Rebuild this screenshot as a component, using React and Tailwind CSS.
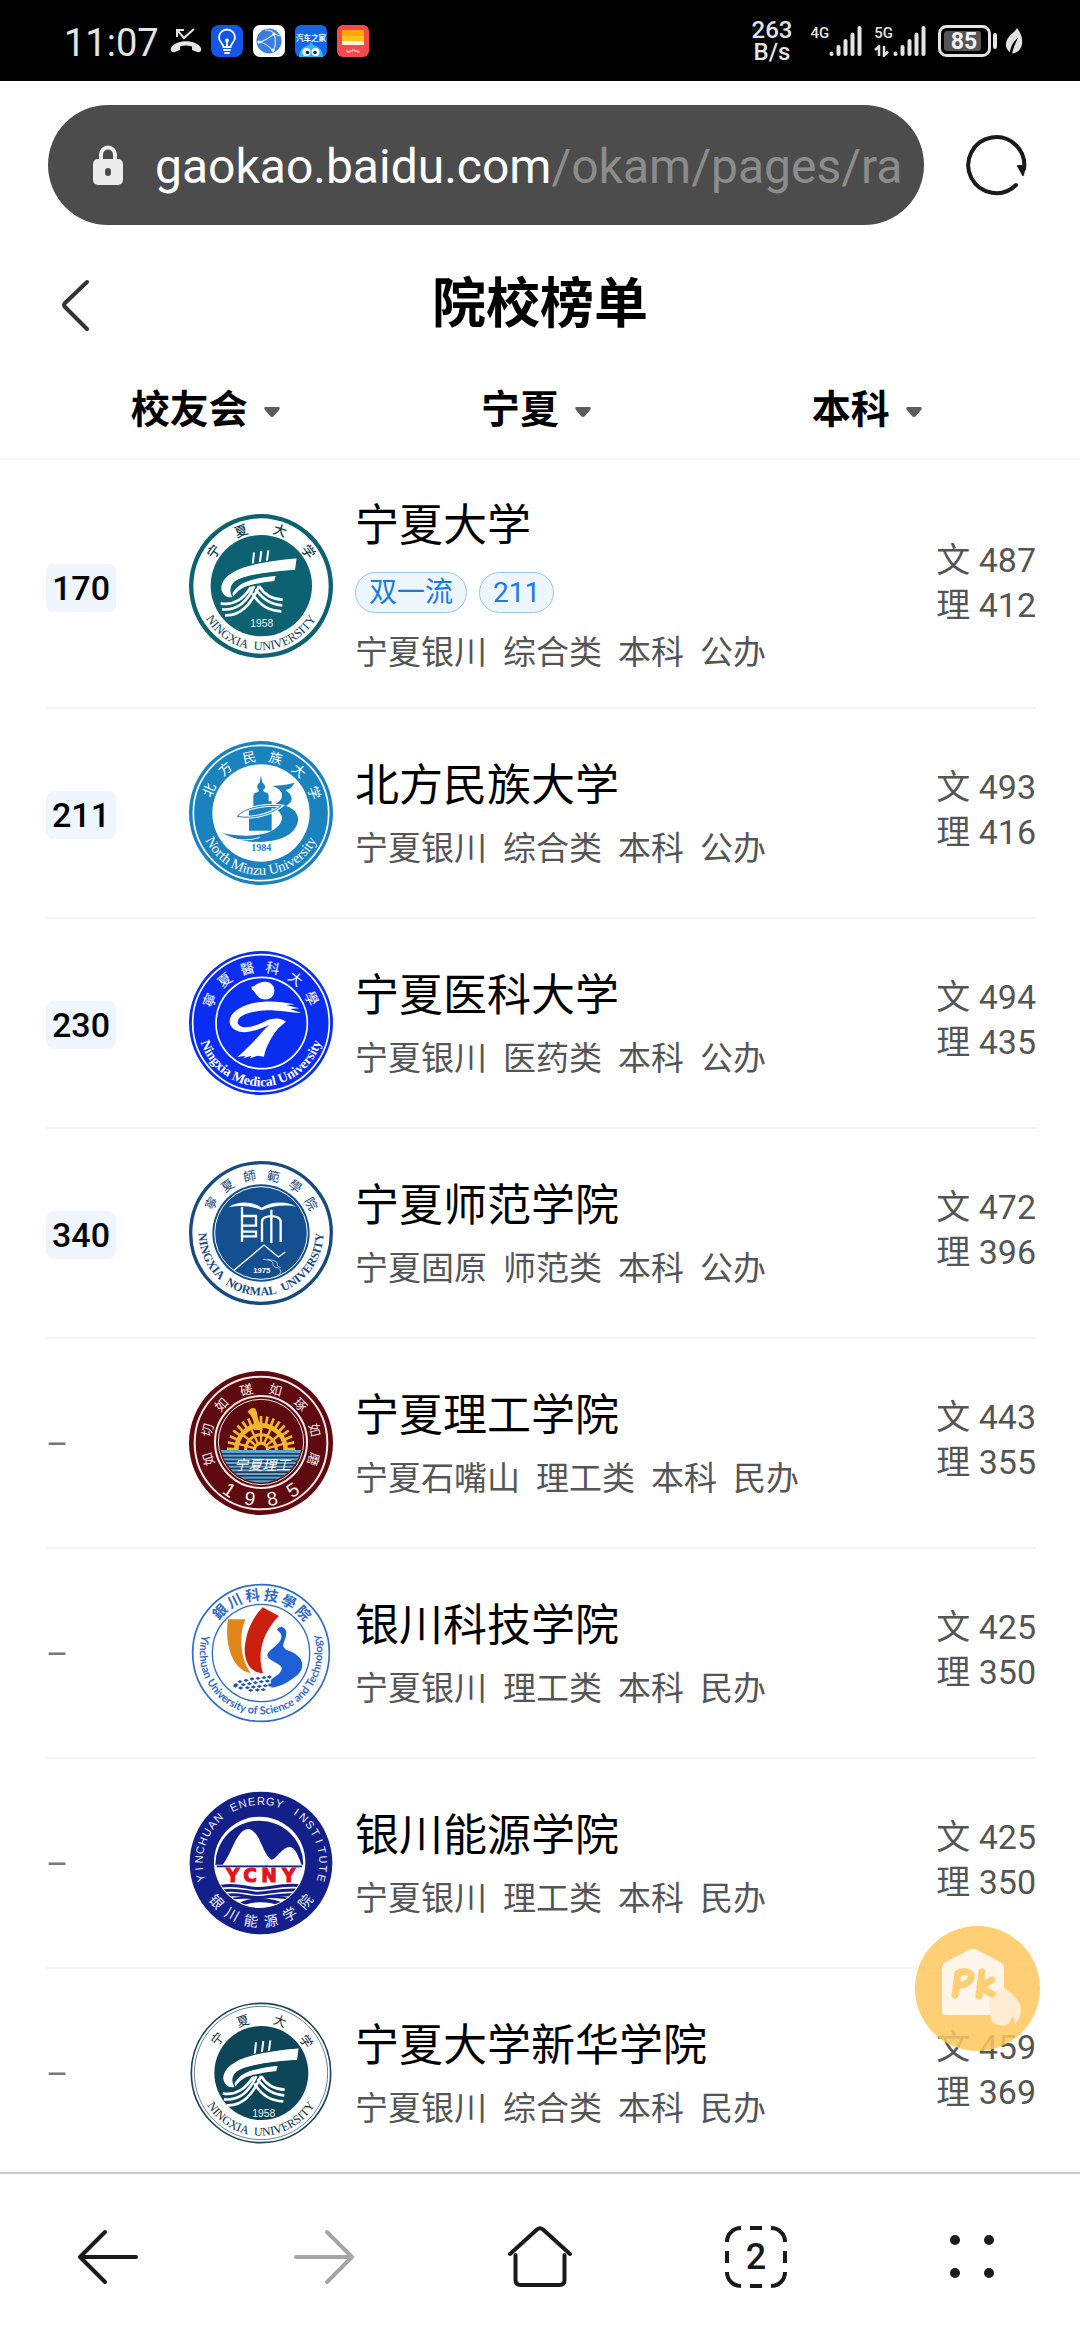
import React, { useId } from "react";

const CJK = "'Noto Sans CJK SC', sans-serif";
const SERIF = "'Liberation Serif', serif";
const SANS = "'Liberation Sans', sans-serif";

/* ---------- helpers for the round seals (432 x 432 units, centred on 0,0) ---------- */

function Seal({ label, children }) {
  return (
    <svg viewBox="-216 -216 432 432" className="size-36 shrink-0" role="img" aria-label={label}>
      {children}
    </svg>
  );
}

function ArcText({ text, r, size, fill, family = SERIF, weight = 400 }) {
  const id = useId();
  return (
    <>
      <path id={id} d={`M0 ${-r} a${r} ${r} 0 1 0 0 ${2 * r} a${r} ${r} 0 1 0 0 ${-2 * r}`} fill="none" />
      <text fontSize={size} fill={fill} fontFamily={family} fontWeight={weight} textAnchor="middle">
        <textPath href={`#${id}`} startOffset="50%">{text}</textPath>
      </text>
    </>
  );
}

function RingChars({ text, r, from, to, size, fill, angles, bottom = false, family = CJK, weight = 400 }) {
  const chars = Array.from(text);
  return chars.map((c, i) => {
    const a = angles ? angles[i] : from + ((to - from) * i) / (chars.length - 1);
    return (
      <text
        key={i}
        x="0"
        y={bottom ? r : -r}
        transform={`rotate(${bottom ? -a : a})`}
        fontSize={size}
        fill={fill}
        fontFamily={family}
        fontWeight={weight}
        textAnchor="middle"
      >
        {c}
      </text>
    );
  });
}

function NingxiaFigure({ color }) {
  return (
    <g fill="none" stroke="#fff" strokeWidth="8">
      <path d="M-21 -101 L-25 -62 M1 -105 L-4 -66 M22 -107 L17 -70" strokeWidth="6" />
      <path d="M-121 52 C-83 60 -50 38 -28 0 M-117 70 C-70 75 -40 45 -20 0 M-108 88 C-60 90 -30 55 -6 0" />
      <path d="M-26 22 C-5 58 25 75 61 76 M-16 10 C5 40 30 57 64 58 M-6 0 C10 26 32 40 65 41" />
      <path d="M47 -33 C-15 -27 -60 -14 -76 6 C-90 20 -94 34 -84 38 C-74 20 -58 6 -33 0 C-8 -7 18 -11 41 -13Z" fill="#fff" stroke={color} strokeWidth="4" />
      <path d="M109 -85 C17 -77 -48 -65 -83 -44 C-123 -22 -128 10 -114 25 C-106 35 -94 38 -83 34 C-94 18 -92 0 -78 -12 C-48 -32 17 -41 104 -47Z" fill="#fff" stroke={color} strokeWidth="4" />
      <text x="2" y="122" fontSize="31" fill="#e8f5f5" stroke="none" fontFamily={SANS} textAnchor="middle">1958</text>
    </g>
  );
}

function NingxiaSeal() {
  const c = "#0d6272";
  return (
    <Seal label="宁夏大学校徽">
      <circle r="216" fill={c} />
      <circle r="203" fill="#fff" />
      <circle cx="1" cy="-1" r="152" fill={c} />
      <RingChars text="宁夏大学" r={161} angles={[-54, -20, 19, 54]} size={40} fill="#12424d" weight={500} />
      <ArcText text={"NINGXIA\u00a0\u00a0UNIVERSITY"} r={192} size={37} fill="#12424d" />
      <NingxiaFigure color={c} />
    </Seal>
  );
}

function XinhuaSeal() {
  const c = "#0c4658";
  return (
    <Seal label="宁夏大学新华学院校徽">
      <circle r="209" fill="#fff" stroke="#1d4654" strokeWidth="5" />
      <circle r="200" fill="none" stroke="#1d4654" strokeWidth="2" />
      <circle cx="1" r="141" fill={c} />
      <RingChars text="宁夏大学" r={152} angles={[-52, -19, 20, 55]} size={38} fill="#12303c" />
      <ArcText text={"NINGXIA\u00a0\u00a0UNIVERSITY"} r={188} size={36} fill="#12303c" />
      <g transform="translate(6 9)">
        <NingxiaFigure color={c} />
      </g>
    </Seal>
  );
}

function MinzuSeal() {
  const c = "#1b82c0";
  return (
    <Seal label="北方民族大学校徽">
      <circle r="216" fill={c} />
      <circle r="203" fill="none" stroke="#fff" strokeWidth="5" />
      <circle r="146" fill="#fff" />
      <RingChars text="北方民族大学" r={156} from={-66} to={69} size={40} fill="#fff" />
      <ArcText text="North Minzu University" r={186} size={43} fill="#fff" />
      <g transform="translate(-243 -933)" fill={c}>
        <path d="M243 820 L247 842 C258 848 257 860 249 864 L252 870 C262 871 266 875 266 882 V898 H275 V986 H207 V918 H220 V882 C220 875 226 871 235 870 L237 864 C230 860 229 848 239 842Z" />
        <path d="M276 852 C300 850 325 848 343 842 C336 858 328 861 316 864 C340 880 342 900 318 912 C350 922 364 948 347 976 C327 1012 270 1023 215 1019 C180 1016 150 1005 128 993 C180 1004 230 1004 268 990 C302 975 314 950 300 932 C290 918 270 915 250 918 C285 910 306 897 306 881 C306 868 296 858 276 852Z" />
        <path d="M172 943 C195 915 262 906 304 912 C272 938 215 952 172 943Z" fill="none" stroke="#fff" strokeWidth="9" />
        <path d="M172 943 C195 915 262 906 304 912 C272 938 215 952 172 943Z" fill="none" stroke={c} strokeWidth="3" />
        <path d="M140 1006 C180 1018 215 1014 240 1006" fill="none" stroke="#fff" strokeWidth="3" />
        <text x="244" y="1048" fontSize="30" fontWeight="700" fontFamily={SERIF} textAnchor="middle">1984</text>
      </g>
    </Seal>
  );
}

function MedicalSeal() {
  return (
    <Seal label="宁夏医科大学校徽">
      <circle r="216" fill="#0a2df2" />
      <circle r="205" fill="none" stroke="#fff" strokeWidth="5" />
      <circle cx="2" r="137" fill="none" stroke="#fff" strokeWidth="5" />
      <RingChars text="寧夏醫科大學" r={153} from={-66} to={64} size={42} fill="#fff" />
      <ArcText text="Ningxia Medical University" r={190} size={41} fill="#fff" weight={700} />
      <g transform="translate(-243 -276)" fill="#fff">
        <path d="M215 166 C222 168 226 160 238 156 C262 146 284 158 283 180 C282 202 262 210 243 203 C228 196 226 182 215 174Z" />
        <path d="M364 246 L330 234 L358 232 L318 222 L345 220 C290 208 240 208 200 222 C150 240 135 274 162 295 C190 314 235 297 268 281 C240 308 222 335 172 378 L196 374 L190 382 L214 374 L210 382 L232 374 L252 377 C258 345 278 312 295 292 L318 272 C300 258 278 262 262 268 C225 288 185 298 174 278 C166 254 210 240 262 238 C300 238 335 246 364 246Z" />
      </g>
    </Seal>
  );
}

function NormalSeal() {
  const c = "#14508f";
  return (
    <Seal label="宁夏师范学院校徽">
      <circle r="211" fill="#fff" stroke="#184a80" strokeWidth="10" />
      <circle r="146" fill={c} />
      <circle r="139" fill="none" stroke="#fff" strokeWidth="3" />
      <RingChars text="寧夏師範學院" r={160} from={-59} to={60} size={38} fill="#184a80" />
      <ArcText text={"NINGXIA\u00a0\u00a0NORMAL\u00a0\u00a0UNIVERSITY"} r={187} size={36} fill="#184a80" weight={700} />
      <g transform="translate(-243 -906)" fill="none" stroke="#fff" strokeWidth="7">
        <path d="M146 829 C175 808 218 812 245 830 C272 812 318 808 348 827 C318 820 275 824 245 838 C215 824 178 822 146 829Z" fill="#fff" stroke="none" />
        <path d="M186 828 V932 M186 855 H228 V884 H186 M186 902 H228 V916 H186" />
        <path d="M246 932 V872 C246 850 302 850 302 872 V932 M274 836 V936" />
        <path d="M162 1018 L252 942 L295 978 L316 963" strokeWidth="4" />
        <path d="M250 985 C300 990 262 1003 292 1010 C310 1018 304 1032 280 1040 M262 985 C312 992 278 1002 302 1010" strokeWidth="2" />
        <text x="245" y="1026" fontSize="23" fontWeight="700" fill="#fff" stroke="none" fontFamily={SANS} textAnchor="middle">1975</text>
      </g>
    </Seal>
  );
}

const rays = Array.from({ length: 17 }, (_, i) => (i - 8) * 11);
const spokes = [-75, -50, -25, 0, 25, 50, 75];
const seaLines = [30, 41, 52, 63, 74, 85, 96, 107, 118];

function LigongSeal() {
  const id = useId();
  const red = "#5e0a10";
  return (
    <Seal label="宁夏理工学院校徽">
      <clipPath id={id}>
        <circle cy="-4" r="123" />
      </clipPath>
      <circle r="216" fill={red} />
      <circle r="199" fill="none" stroke="#fbe9e6" strokeWidth="6" />
      <circle cy="-3" r="138" fill="none" stroke="#fbe9e6" strokeWidth="6" />
      <circle cy="-3" r="128" fill="none" stroke="#fbe9e6" strokeWidth="3" />
      <RingChars text="如切如磋如琢如磨" r={151} from={-107} to={107} size={39} fill="#fbe9e6" />
      <RingChars text="1985" r={190} from={-34} to={34} size={58} fill="#fbe9e6" family={SANS} bottom />
      <g clipPath={`url(#${id})`}>
        <g transform="translate(0 21)" stroke="#f2b632" fill="none">
          {rays.map((a) => (
            <path key={a} d="M0 -74 V-102" strokeWidth="8" transform={`rotate(${a})`} />
          ))}
          <path d="M-74 0 A74 74 0 0 1 74 0" strokeWidth="14" />
          <path d="M-46 0 A46 46 0 0 1 46 0" strokeWidth="9" />
          <path d="M-20 0 A20 20 0 0 1 20 0" strokeWidth="9" />
          {spokes.map((a) => (
            <path key={a} d="M0 -18 V-70" strokeWidth="7" transform={`rotate(${a})`} />
          ))}
          <path d="M-40 -114 C-32 -128 -18 -130 -14 -118 C-10 -108 -12 -98 -2 -78 L6 -60 H-22 C-18 -80 -24 -100 -40 -114Z" fill="#f2b632" stroke="none" />
        </g>
        <rect x="-130" y="21" width="260" height="110" fill="#58a8d8" />
        {seaLines.map((y) => (
          <rect key={y} x="-130" y={y} width="260" height="5" fill="#26384f" />
        ))}
        <text x="4" y="82" fontSize="42" fill="#fff" fontFamily={CJK} fontStyle="italic" textAnchor="middle">宁夏理工</text>
      </g>
    </Seal>
  );
}

const tiles = [
  [-66, 92], [-48, 88], [-30, 84], [-12, 82], [6, 80], [22, 78], [-78, 101], [-56, 101], [-38, 98], [-20, 95], [-2, 92],
  [16, 90], [-64, 111], [-44, 110], [-26, 108], [-8, 106], [10, 104], [24, 102], [-34, 118], [-14, 117], [4, 116], [-80, 105],
];

function KejiSeal() {
  const c = "#2f6bc9";
  return (
    <Seal label="银川科技学院校徽">
      <circle r="205" fill="#fff" stroke={c} strokeWidth="5" />
      <circle r="146" fill="#fff" stroke={c} strokeWidth="4" />
      <RingChars text="銀川科技學院" r={159} from={-45} to={47} size={43} fill={c} weight={700} />
      <ArcText text="Yinchuan University of Science and Technology" r={184} size={33} fill={c} family="Lato, sans-serif" weight={700} />
      <g transform="translate(-245 -908)">
        <path d="M146 807 H199 C178 850 182 925 214 968 C160 962 134 880 146 807Z" fill="#e0861a" />
        <path d="M250 771 L299 797 C250 845 232 910 251 968 C208 968 190 925 198 878 C204 835 222 800 250 771Z" fill="#c9200f" />
        <path d="M293 838 C300 824 322 830 321 850 C318 878 298 888 330 902 C375 918 380 955 350 978 C330 992 310 1008 276 1012 L274 990 C285 978 305 972 308 954 C302 936 262 932 264 912 C270 895 300 885 306 862 C308 848 300 846 293 838Z" fill="#1f5fd6" />
        {tiles.map(([x, y], i) => (
          <path key={i} d={`M${x + 240} ${y + 902} l8 -5 l8 5 l-8 5z`} fill="#2456a8" />
        ))}
      </g>
    </Seal>
  );
}

function EnergySeal() {
  const id = useId();
  const c = "#14208a";
  return (
    <Seal label="银川能源学院校徽">
      <clipPath id={id}>
        <circle cx="-4" cy="-2" r="134" />
      </clipPath>
      <circle r="214" fill={c} />
      <circle cx="-4" cy="-2" r="137" fill="#fff" />
      <RingChars text="YINCHUAN ENERGY INSTITUTE" r={175} from={-104} to={104} size={33} fill="#eef0fb" family={SANS} />
      <RingChars text="银川能源学院" r={192} from={-49} to={49} size={42} fill="#eef0fb" bottom />
      <g transform="translate(-245 -280)">
        <path d="M108 285 A132 132 0 0 1 372 285Z" fill={c} />
        <path d="M130 286 C158 250 172 180 206 178 C242 180 250 258 277 270 C295 266 308 232 331 232 C348 233 358 262 367 286Z" fill="#fff" />
        <path d="M112 290 H368" stroke={c} strokeWidth="5" />
      </g>
      <g fill="#e0141e" stroke="#e0141e" strokeWidth="3" fontSize="56" fontWeight="700" fontFamily="'DejaVu Sans', sans-serif" textAnchor="middle">
        <text x="-85" y="58">Y</text>
        <text x="-33" y="58">C</text>
        <text x="24" y="58">N</text>
        <text x="83" y="58">Y</text>
      </g>
      <g clipPath={`url(#${id})`}>
        <g fill="none" stroke={c} strokeWidth="9">
          <path d="M-120 70 C-80 62 -50 72 -20 76 C20 80 50 62 120 68" />
          <path d="M-120 84 C-80 76 -50 86 -20 90 C20 94 50 76 120 82" />
          <path d="M-110 98 C-80 90 -50 100 -20 103 C20 106 50 90 110 96" />
          <path d="M-100 112 C-70 98 -40 108 -4 104 C30 100 60 100 100 110" strokeWidth="6" />
          <path d="M-60 124 C-30 108 20 108 56 122" strokeWidth="12" />
        </g>
      </g>
    </Seal>
  );
}

/* ---------- data ---------- */

const filters = ["校友会", "宁夏", "本科"];

const schools = [
  { rank: "170", Logo: NingxiaSeal, name: "宁夏大学", tags: ["双一流", "211"], meta: ["宁夏银川", "综合类", "本科", "公办"], arts: 487, science: 412 },
  { rank: "211", Logo: MinzuSeal, name: "北方民族大学", meta: ["宁夏银川", "综合类", "本科", "公办"], arts: 493, science: 416 },
  { rank: "230", Logo: MedicalSeal, name: "宁夏医科大学", meta: ["宁夏银川", "医药类", "本科", "公办"], arts: 494, science: 435 },
  { rank: "340", Logo: NormalSeal, name: "宁夏师范学院", meta: ["宁夏固原", "师范类", "本科", "公办"], arts: 472, science: 396 },
  { Logo: LigongSeal, name: "宁夏理工学院", meta: ["宁夏石嘴山", "理工类", "本科", "民办"], arts: 443, science: 355 },
  { Logo: KejiSeal, name: "银川科技学院", meta: ["宁夏银川", "理工类", "本科", "民办"], arts: 425, science: 350 },
  { Logo: EnergySeal, name: "银川能源学院", meta: ["宁夏银川", "理工类", "本科", "民办"], arts: 425, science: 350 },
  { Logo: XinhuaSeal, name: "宁夏大学新华学院", meta: ["宁夏银川", "综合类", "本科", "民办"], arts: 459, science: 369 },
];

/* ---------- status bar ---------- */

function Signal() {
  return (
    <svg viewBox="0 0 33 32" className="h-8 w-[33px]" fill="none" stroke="#e4e4e4" strokeWidth="4" strokeLinecap="round" aria-hidden="true">
      <path d="M2.500 28.500V29 M9.500 22V29 M16.500 16V29 M23.500 9.500V29 M30.500 3V29" />
    </svg>
  );
}

function StatusBar() {
  return (
    <div className="flex h-[81px] shrink-0 items-center bg-black pr-[57px] pl-16 text-[#e4e4e4]">
      <span className="pt-1 text-[38px] leading-none">11:07</span>
      <svg viewBox="0 0 32 26" className="ml-[11px] h-[26px] w-8" aria-label="未接来电">
        <path d="M7 9V2h7M7.500 2.500L14 10L24 1" fill="none" stroke="#e4e4e4" strokeWidth="2" />
        <path d="M1 20C5 11 27 11 31 20C32 23 30 25 27 24L22 22V18.500C18 17 14 17 10 18.500V22L5 24C2 25 0 23 1 20Z" fill="#e4e4e4" />
      </svg>
      <div className="ml-[9px] flex gap-2.5">
        <svg viewBox="0 0 32 32" className="size-8" aria-hidden="true">
          <rect width="32" height="32" rx="8" fill="#1257e8" />
          <path d="M12.500 22C12 18 8 17 8 12.500A8 8 0 0 1 24 12.500C24 17 20 18 19.500 22Z M13 25H19 M14 28H18 M16 21V16" fill="none" stroke="#fff" strokeWidth="1.800" strokeLinecap="round" />
          <circle cx="16" cy="15.500" r="2" fill="#fff" />
        </svg>
        <svg viewBox="0 0 32 32" className="size-8" aria-hidden="true">
          <rect width="32" height="32" rx="7" fill="#fff" />
          <circle cx="16" cy="16" r="12.500" fill="#3b7fdc" />
          <path d="M6 17C12 16 16 13 21 9M6 17C13 18 17 22 20 26M21 9C23 14 23 20 20 27M12 5C16 5 20 6 21 9M21 9L27 11" fill="none" stroke="#cfe2fa" strokeWidth="1.200" />
          <circle cx="21" cy="9" r="1.600" fill="#fff" />
          <circle cx="20" cy="25" r="1.600" fill="#fff" />
          <circle cx="6" cy="17" r="1.600" fill="#fff" />
        </svg>
        <svg viewBox="0 0 32 32" className="size-8" aria-hidden="true">
          <rect width="32" height="32" rx="6" fill="#1468e6" />
          <path d="M4 32C4 16 28 16 28 32Z" fill="#39b5ee" />
          <path d="M13 21L16 17L19 21Z" fill="#39b5ee" />
          <text x="16" y="16" fontSize="7.500" fontWeight="700" fill="#fff" fontFamily={CJK} textAnchor="middle">汽车之家</text>
          <circle cx="11.500" cy="27" r="4" fill="#fff" />
          <circle cx="20.500" cy="27" r="4" fill="#fff" />
          <circle cx="12.500" cy="27.500" r="1.800" fill="#12284e" />
          <circle cx="20" cy="27.500" r="1.800" fill="#12284e" />
        </svg>
        <svg viewBox="0 0 32 32" className="size-8" aria-hidden="true">
          <rect width="32" height="32" rx="6" fill="#f4494d" />
          <rect x="5" y="5" width="22" height="6" fill="#ffa800" />
          <rect x="5" y="11" width="22" height="5" fill="#ffc21a" />
          <rect x="5" y="16" width="22" height="4" fill="#fff3dc" />
          <path d="M10 25v2h3v-2M15 27v-2h3v2M20 25v2h3" fill="none" stroke="#ffe3e0" strokeWidth="1" />
        </svg>
      </div>

      <div className="ml-auto flex items-center">
        <span className="text-center text-2xl leading-[22px] font-medium">
          263
          <br />
          B/s
        </span>
        <div className="ml-[18px] flex h-8 items-start">
          <span className="text-[15px] leading-4 font-medium">4G</span>
          <Signal />
        </div>
        <div className="ml-3 flex h-8 items-start">
          <span className="flex flex-col items-start">
            <span className="text-[15px] leading-4 font-medium">5G</span>
            <svg viewBox="0 0 16 12" className="mt-1 h-3 w-4" fill="none" stroke="#e4e4e4" strokeWidth="2.500" aria-hidden="true">
              <path d="M1 5L5 1.500V11M10 1V10.500L14 6.500" />
            </svg>
          </span>
          <Signal />
        </div>
        <svg viewBox="0 0 60 34" className="ml-3 h-[34px] w-[60px]" aria-label="电量 85%">
          <rect x="1.500" y="2.500" width="50" height="29" rx="7" fill="none" stroke="#e4e4e4" strokeWidth="3" />
          <rect x="6" y="7" width="37" height="20" rx="3" fill="#555" />
          <rect x="55" y="9" width="4" height="16" rx="2" fill="#e4e4e4" />
          <text x="26" y="25" fontSize="23" fontWeight="700" fill="#f2f2f2" fontFamily="Roboto, sans-serif" textAnchor="middle">85</text>
        </svg>
        <svg viewBox="0 0 18 28" className="ml-[7px] h-7 w-[18px]" aria-hidden="true">
          <path d="M12 1C16 6 18 12 17 17C16 23 12 26 7 26.500C9 19 11 15 13 11C8 15 6 19 5 25C0 22 0 16 3 11C6 7 10 5 12 1Z" fill="#e4e4e4" />
        </svg>
      </div>
    </div>
  );
}

/* ---------- browser chrome ---------- */

function AddressBar() {
  return (
    <div className="flex items-center pt-6 pr-[52px] pb-5 pl-12">
      <button type="button" className="flex h-[120px] min-w-0 flex-1 items-center rounded-full bg-[#4c4c4c] pr-6 pl-[45px] text-left">
        <svg viewBox="0 0 30 40" className="h-10 w-[30px] shrink-0" aria-label="安全连接">
          <path d="M8 16V9.500A7 7 0 0 1 22 9.500V16" fill="none" stroke="#ececec" strokeWidth="4" />
          <rect y="14" width="30" height="26" rx="5" fill="#ececec" />
          <rect x="12" y="23" width="6" height="8" rx="3" fill="#4c4c4c" />
        </svg>
        <span className="ml-8 min-w-0 flex-1 overflow-hidden pt-1 text-5xl leading-[60px] whitespace-nowrap text-[#8c8c8c]">
          <span className="text-white">gaokao.baidu.com</span>/okam/pages/rank
        </span>
      </button>
      <button type="button" aria-label="刷新" className="ml-10">
        <svg viewBox="0 0 64 64" className="size-16" fill="none">
          <path d="M52 52A28 28 0 1 1 60 36" stroke="#1a1a1a" strokeWidth="4" strokeLinecap="round" />
          <path d="M54 33H61L59 42Z" fill="#1a1a1a" stroke="#1a1a1a" strokeWidth="2" strokeLinejoin="round" />
        </svg>
      </button>
    </div>
  );
}

function NavBar() {
  const btn = "flex items-center justify-center";
  return (
    <nav className="grid h-[168px] shrink-0 grid-cols-5 border-t-2 border-[#cbcbcb] bg-white text-[#1a1a1a]">
      <button type="button" aria-label="后退" className={btn}>
        <svg viewBox="0 0 62 56" className="h-14 w-[62px]" fill="none" stroke="currentColor" strokeWidth="4" strokeLinecap="round" strokeLinejoin="round">
          <path d="M59 28H3M28 3L3 28L28 53" />
        </svg>
      </button>
      <button type="button" aria-label="前进" className={`${btn} text-[#a6a6a6]`}>
        <svg viewBox="0 0 62 56" className="h-14 w-[62px]" fill="none" stroke="currentColor" strokeWidth="4" strokeLinecap="round" strokeLinejoin="round">
          <path d="M3 28H59M34 3L59 28L34 53" />
        </svg>
      </button>
      <button type="button" aria-label="主页" className={btn}>
        <svg viewBox="0 0 66 62" className="h-[62px] w-[66px]" fill="none" stroke="currentColor" strokeWidth="4" strokeLinecap="round" strokeLinejoin="round">
          <path d="M3 28L30 3.500Q33 1 36 3.500L63 28M8.500 29V54Q8.500 59 13.500 59H52.500Q57.500 59 57.500 54V29" />
        </svg>
      </button>
      <button type="button" aria-label="标签页，共 2 个" className={btn}>
        <svg viewBox="0 0 62 62" className="size-[62px]" fill="none" stroke="currentColor" strokeWidth="4">
          <path d="M2 16C2 8 8 2 16 2M46 2C54 2 60 8 60 16M60 46C60 54 54 60 46 60M16 60C8 60 2 54 2 46M25 2H37M25 60H37M2 25V37M60 25V37" />
          <text x="31" y="43" fontSize="36" fontWeight="500" fill="currentColor" stroke="none" fontFamily="Roboto, sans-serif" textAnchor="middle">2</text>
        </svg>
      </button>
      <button type="button" aria-label="菜单" className={btn}>
        <svg viewBox="0 0 46 46" className="size-[46px]" fill="currentColor">
          <circle cx="6" cy="6" r="5" />
          <circle cx="40" cy="6" r="5" />
          <circle cx="6" cy="39" r="5" />
          <circle cx="40" cy="39" r="5" />
        </svg>
      </button>
    </nav>
  );
}

/* ---------- page content ---------- */

function PageHeader() {
  return (
    <header className="border-b-2 border-[#f5f5f5] pb-[3px]">
      <div className="grid h-[120px] grid-cols-[1fr_auto_1fr] items-center">
        <button type="button" aria-label="返回" className="ml-[60px] justify-self-start">
          <svg viewBox="0 0 30 52" className="h-[52px] w-[30px]" fill="none" stroke="#333" strokeWidth="4" strokeLinecap="round" strokeLinejoin="round">
            <path d="M27 3L5 24Q3 26 5 28L27 50" />
          </svg>
        </button>
        <h1 className="text-[54px] leading-none font-bold text-black">院校榜单</h1>
      </div>
      <div className="grid grid-cols-3 pr-12 pl-10">
        {filters.map((f) => (
          <button key={f} type="button" aria-haspopup="listbox" className="flex h-[90px] items-center justify-center gap-4 text-[39px] font-bold text-black">
            {f}
            <svg viewBox="0 0 16 10" className="mt-1 h-2.5 w-4" aria-hidden="true">
              <path d="M2 0H14Q17 0 15 3L10 9Q8 11 6 9L1 3Q-1 0 2 0Z" fill="#5c5c5c" />
            </svg>
          </button>
        ))}
      </div>
    </header>
  );
}

function SchoolRow({ rank, Logo, name, tags, meta, arts, science }) {
  return (
    <li className="flex items-center border-b-2 border-[#f5f5f5] py-8">
      <div className="w-[143px] shrink-0 pt-1">
        {rank ? (
          <span className="inline-flex h-12 items-center rounded-lg bg-[#f0f6fe] px-1.5 text-[34px] leading-none font-medium text-black">{rank}</span>
        ) : (
          <span className="text-[34px] leading-none text-[#777]">–</span>
        )}
      </div>
      <Logo />
      <div className="ml-[22px] min-w-0 flex-1">
        <h2 className="text-[44px] leading-[60px] text-black">{name}</h2>
        {tags && (
          <div className="flex gap-3 pt-4 pb-[7px]">
            {tags.map((t) => (
              <span key={t} className="flex h-[41px] items-center rounded-full border border-[#9cc4ee] bg-[#edf5fd] px-[13px] text-[28px] leading-none text-[#1b7be0]">{t}</span>
            ))}
          </div>
        )}
        <p className="mt-[11px] flex gap-4 text-[33px] leading-[44px] text-[#555]">
          {meta.map((m) => (
            <span key={m}>{m}</span>
          ))}
        </p>
      </div>
      <div className="pb-1.5 text-right text-[34px] leading-[45px] text-[#555]">
        <p>文 {arts}</p>
        <p>理 {science}</p>
      </div>
    </li>
  );
}

function PkButton() {
  return (
    <button type="button" aria-label="院校 PK" className="absolute right-10 bottom-[121px] rounded-full opacity-85">
      <svg viewBox="0 0 125 125" className="size-[125px]">
        <circle cx="62.500" cy="62.500" r="62.500" fill="#ffc75f" />
        <path d="M27 42Q27 38 31 36L54 24Q58 22 62 24L85 36Q89 38 89 42V89H31Q27 89 27 85Z" fill="#fff5e8" />
        <path d="M74 80C72 68 80 62 90 62C98 68 106 76 106 84C106 90 103 95 100 98C99 90 97 88 95 96C90 102 80 100 76 94Z" fill="#ffe9cc" />
        <path d="M43 47L40 69M43 47C60 41 62 58 42 60M67 46L64 70M77 54L65 61L77 68" fill="none" stroke="#ffc75f" strokeWidth="7" strokeLinecap="round" strokeLinejoin="round" />
      </svg>
    </button>
  );
}

export default function App() {
  return (
    <div className="flex h-screen flex-col bg-white font-[Roboto,'Noto_Sans_CJK_SC',sans-serif]">
      <StatusBar />
      <AddressBar />
      <div className="relative flex min-h-0 flex-1 flex-col">
        <PageHeader />
        <main className="min-h-0 flex-1 overflow-hidden">
          <ul className="mr-11 ml-[46px] pt-1">
            {schools.map((s) => (
              <SchoolRow key={s.name} {...s} />
            ))}
          </ul>
        </main>
        <PkButton />
      </div>
      <NavBar />
    </div>
  );
}
